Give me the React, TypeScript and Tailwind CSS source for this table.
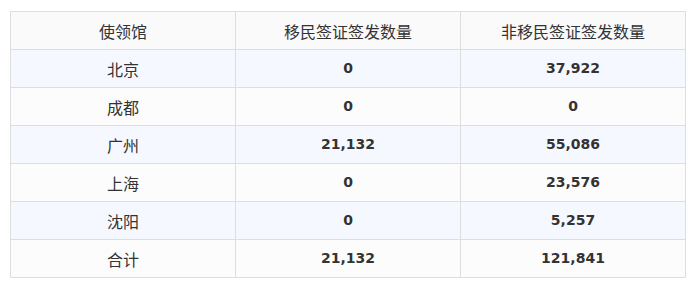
import React from "react";

const rows: [string, string, string][] = [
  ["北京", "0", "37,922"],
  ["成都", "0", "0"],
  ["广州", "21,132", "55,086"],
  ["上海", "0", "23,576"],
  ["沈阳", "0", "5,257"],
  ["合计", "21,132", "121,841"],
];

const cjk = { fontFamily: '"Noto Sans CJK SC", "Noto Sans", sans-serif' };
const num = { fontFamily: '"DejaVu Sans", "Noto Sans CJK SC", sans-serif' };

export default function App() {
  return (
    <div className="w-[700px] h-[289px] bg-white pt-[11px] pl-[10px]">
      <table className="w-[676px] border-collapse table-fixed text-[#333]">
        <thead>
          <tr className="bg-[#fafafa] h-[38px]">
            {["使领馆", "移民签证签发数量", "非移民签证签发数量"].map((h) => (
              <th
                key={h}
                style={cjk}
                className="border border-[#dedede] font-normal text-[16px] leading-none text-center p-0"
              >
                {h}
              </th>
            ))}
          </tr>
        </thead>
        <tbody>
          {rows.map((r, i) => (
            <tr
              key={r[0]}
              className={`h-[38px] ${i % 2 === 0 ? "bg-[#f5f9ff]" : "bg-[#fcfcfc]"}`}
            >
              <td style={cjk} className="border border-[#dedede] text-[16px] leading-none text-center p-0">
                {r[0]}
              </td>
              <td style={num} className="border border-[#dedede] text-[14px] font-bold text-center p-0">
                {r[1]}
              </td>
              <td style={num} className="border border-[#dedede] text-[14px] font-bold text-center p-0">
                {r[2]}
              </td>
            </tr>
          ))}
        </tbody>
      </table>
    </div>
  );
}
